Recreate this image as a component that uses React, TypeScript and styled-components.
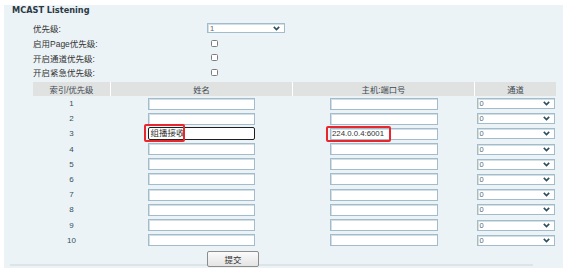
import React from "react";
import styled, { createGlobalStyle } from "styled-components";

const Global = createGlobalStyle`
  html, body { margin: 0; padding: 0; background: #ffffff; }
  body { font-family: "Liberation Sans", "Noto Sans CJK SC", sans-serif; }
  * { box-sizing: border-box; }
`;

const Page = styled.div`
  padding-top: 5px;
  width: 569px;
  height: 268px;
  overflow: hidden;
`;

const Panel = styled.div`
  margin-left: 4px;
  width: 559px;
  height: 263px;
  background: #ecf3f7;
  display: flex;
  flex-direction: column;
`;

const Title = styled.div`
  height: 11px;
  line-height: 11px;
  padding-left: 8px;
  font-family: "DejaVu Sans", "Noto Sans CJK SC", sans-serif;
  font-weight: bold;
  font-size: 8.2px;
  color: #2b3a44;
`;

const Form = styled.div`
  margin-top: 5px;
  margin-left: 29px;
  display: grid;
  grid-template-columns: 174px auto;
  grid-auto-rows: 14.7px;
  align-items: center;
`;

const Label = styled.div`
  font-size: 8.5px;
  color: #333;
  white-space: nowrap;
`;

const Check = styled.span`
  display: block;
  margin-left: 4px;
  width: 7px;
  height: 7px;
  border: 1px solid #7d7d7d;
  border-radius: 1.5px;
  background: #fff;
`;

const SelectBox = styled.div<{ $w: number; $h: number }>`
  position: relative;
  width: ${(p) => p.$w}px;
  height: ${(p) => p.$h}px;
  border: 1px solid #a3bccb;
  box-shadow: inset 1px 1px 0 #d3dfe7;
  background: #fff;
  display: flex;
  align-items: center;
  justify-content: space-between;
  padding: 0 4px 0 2px;
  font-size: 7.5px;
  color: #5a6870;
`;

const Chevron = () => (
  <svg width="7" height="5" viewBox="0 0 7 5">
    <path d="M0.8 0.9 L3.5 3.6 L6.2 0.9" fill="none" stroke="#2f4f5f" strokeWidth="1.6" />
  </svg>
);

const Table = styled.div`
  margin-top: 2.2px;
  margin-left: 29px;
  width: 523px;
`;

const Grid = styled.div<{ $h: number }>`
  display: grid;
  grid-template-columns: 77px 181px 181px 81px;
  column-gap: 1px;
  height: ${(p) => p.$h}px;
  align-items: center;
`;

const Head = styled.div`
  height: 100%;
  background: #e0e1e1;
  display: flex;
  align-items: center;
  justify-content: center;
  font-size: 8.3px;
  color: #3d4a52;
`;

const HeaderRow = styled(Grid)`
  background: #fff;
`;

const Num = styled.div`
  text-align: center;
  font-size: 8px;
  color: #34505c;
`;

const Cell = styled.div`
  display: flex;
  justify-content: center;
`;

const Wrap = styled.span`
  position: relative;
  display: block;
`;

const Input = styled.div<{ $w: number; $focus?: boolean; $fs?: number }>`
  width: ${(p) => p.$w}px;
  height: ${(p) => (p.$focus ? 13 : 12)}px;
  background: #fff;
  border: 1px solid ${(p) => (p.$focus ? "#1e1e1e" : "#a3bccb")};
  border-radius: ${(p) => (p.$focus ? 2 : 0)}px;
  box-shadow: ${(p) => (p.$focus ? "none" : "inset 1px 1px 0 #d3dfe7")};
  font-size: ${(p) => p.$fs ?? 7}px;
  line-height: 10px;
  padding-left: 1.5px;
  color: #333;
  white-space: nowrap;
  overflow: hidden;
`;

const Highlight = styled.span<{ $l: number; $t: number; $w: number; $h: number }>`
  position: absolute;
  left: ${(p) => p.$l}px;
  top: ${(p) => p.$t}px;
  width: ${(p) => p.$w}px;
  height: ${(p) => p.$h}px;
  border: 2px solid #e8262b;
  border-radius: 2px;
  pointer-events: none;
`;

const ButtonRow = styled.div`
  margin-top: 1px;
  height: 15px;
  padding-left: 203px;
`;

const Button = styled.button`
  width: 52px;
  height: 16px;
  border: 1px solid #8c8c8c;
  border-radius: 2px;
  background: linear-gradient(#fbfbfb, #e4e4e4);
  font-family: "Liberation Sans", "Noto Sans CJK SC", sans-serif;
  font-size: 8.5px;
  color: #333;
  padding: 0;
  position: relative;
  z-index: 1;
`;

const BottomLine = styled.div`
  margin-left: 6px;
  width: 523px;
  height: 2px;
  background: #dde3e6;
`;

const rows = Array.from({ length: 10 }, (_, i) => i + 1);

export default function App() {
  return (
    <Page>
      <Global />
      <Panel>
        <Title>MCAST Listening</Title>
        <Form>
          <Label>优先级:</Label>
          <SelectBox $w={78} $h={10}>
            <span>1</span>
            <Chevron />
          </SelectBox>
          <Label>启用Page优先级:</Label>
          <Check />
          <Label>开启通道优先级:</Label>
          <Check />
          <Label>开启紧急优先级:</Label>
          <Check />
        </Form>
        <Table>
          <HeaderRow $h={14}>
            <Head>索引/优先级</Head>
            <Head>姓名</Head>
            <Head>主机:端口号</Head>
            <Head>通道</Head>
          </HeaderRow>
          {rows.map((n) => (
            <Grid key={n} $h={15.2}>
              <Num>{n}</Num>
              <Cell>
                {n === 3 ? (
                  <Wrap>
                    <Input $w={107} $focus $fs={8.5}>组播接收</Input>
                    <Highlight $l={-3.7} $t={-3} $w={40.7} $h={18} />
                  </Wrap>
                ) : (
                  <Input $w={107} />
                )}
              </Cell>
              <Cell>
                {n === 3 ? (
                  <Wrap>
                    <Input $w={108} $fs={7.8}>224.0.0.4:6001</Input>
                    <Highlight $l={-3.6} $t={-2.3} $w={65.3} $h={16.7} />
                  </Wrap>
                ) : (
                  <Input $w={108} />
                )}
              </Cell>
              <Cell>
                <SelectBox $w={78} $h={11}>
                  <span>0</span>
                  <Chevron />
                </SelectBox>
              </Cell>
            </Grid>
          ))}
        </Table>
        <ButtonRow>
          <Button>提交</Button>
        </ButtonRow>
        <BottomLine />
      </Panel>
    </Page>
  );
}
